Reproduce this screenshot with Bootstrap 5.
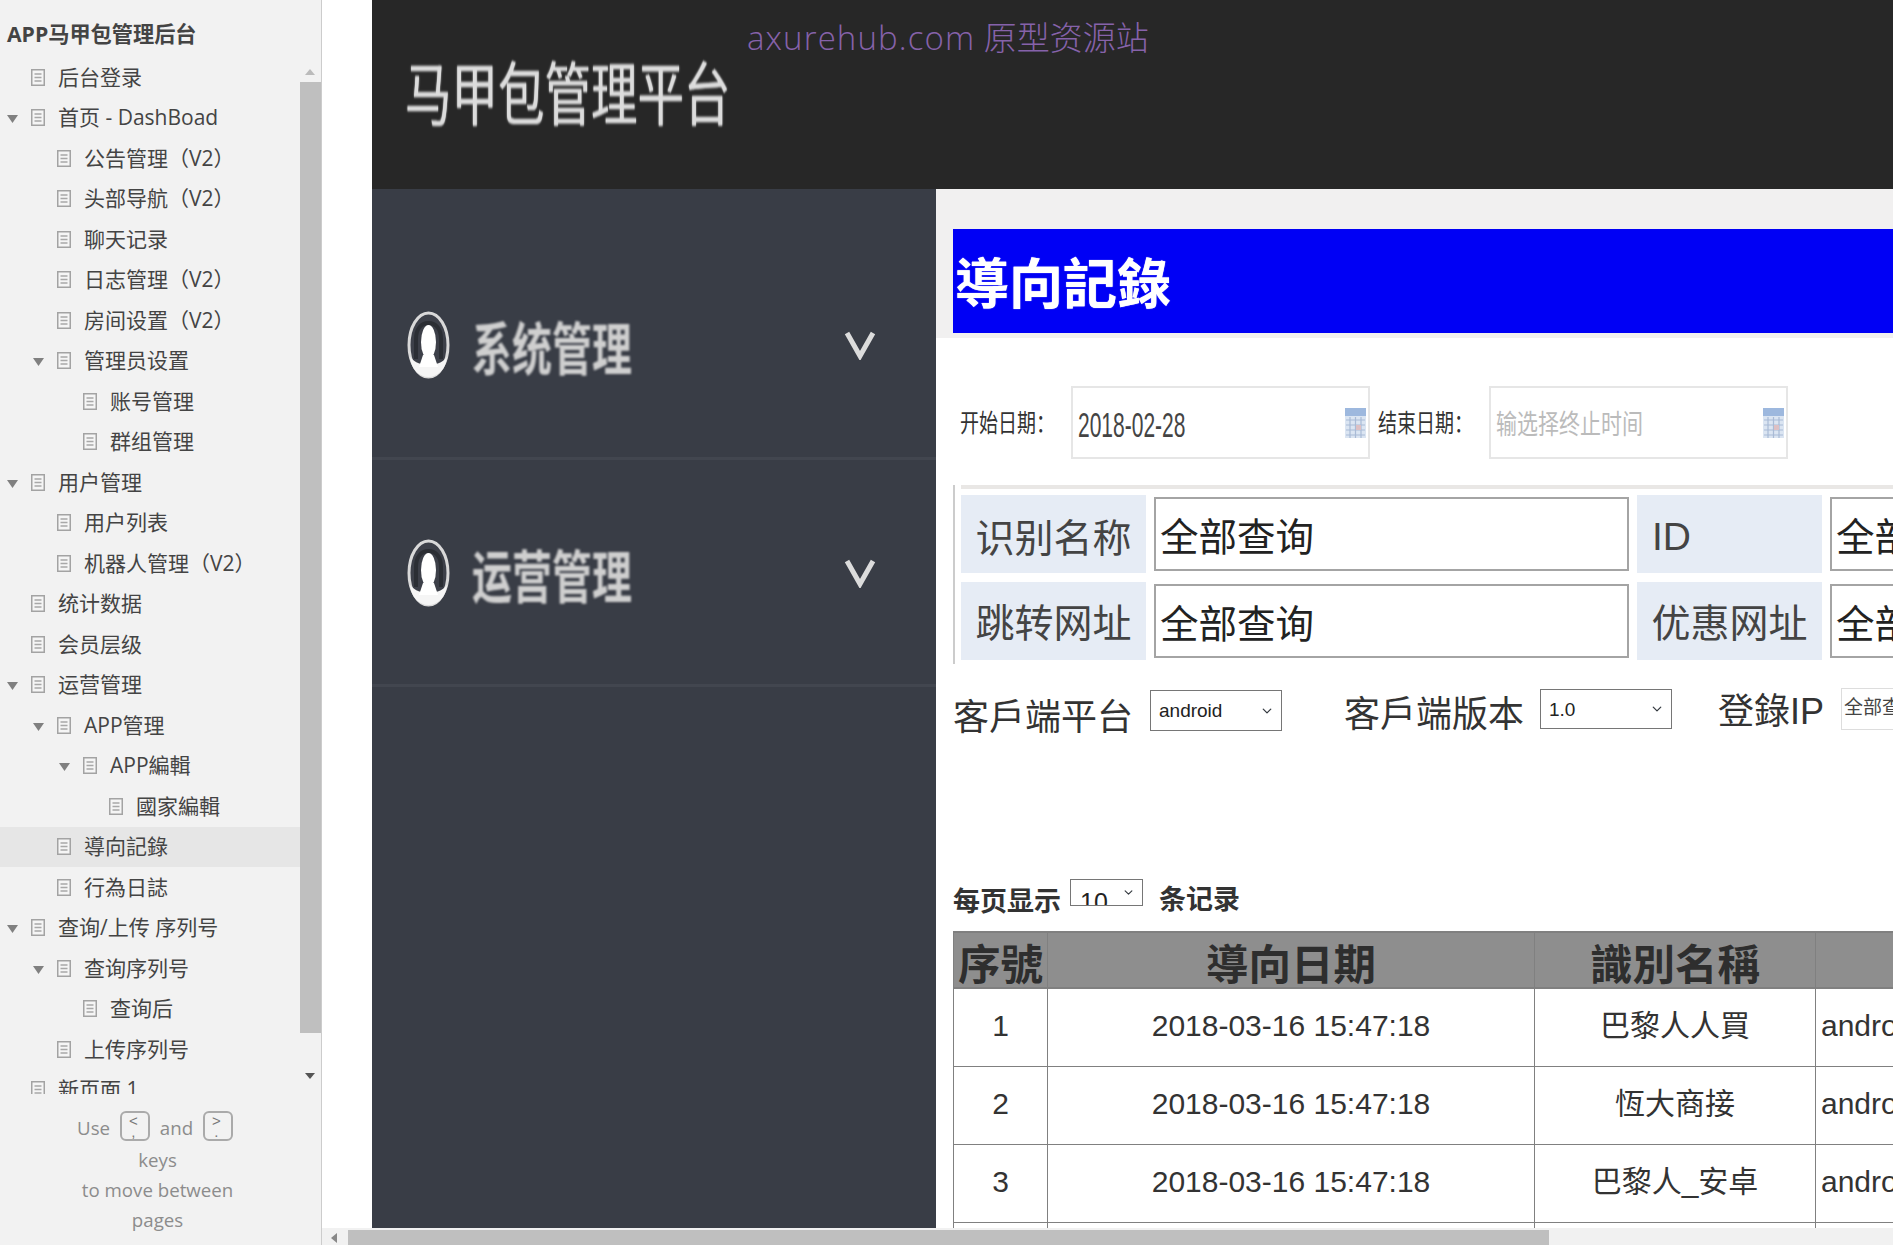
<!DOCTYPE html>
<html lang="zh">
<head>
<meta charset="utf-8">
<title>导向记录</title>
<link href="https://cdn.jsdelivr.net/npm/bootstrap@5.3.0/dist/css/bootstrap.min.css" rel="stylesheet">
<style>
html,body{height:1245px;overflow:hidden;background:#fff}
body{font-family:"Liberation Sans","Noto Sans CJK SC",sans-serif;color:#333}
.side{width:322px;flex:none;height:1245px;background:#f2f2f2;border-right:1px solid #ccc;font-family:"Open Sans","Noto Sans CJK SC",sans-serif}
.side-title{height:57px;padding:20px 0 0 7px;font-size:21.2px;line-height:28px;font-weight:700;color:#444;white-space:nowrap}
.tree-wrap{height:1037px}
.tree{flex:1 1 auto;overflow:hidden;min-width:0}
.tree-row{height:40.5px;font-size:21px;color:#444;white-space:nowrap}
.tree-row.on{background:#e6e6e6}
.lv0{padding-left:7px}.lv1{padding-left:33px}.lv2{padding-left:59px}.lv3{padding-left:85px}
.tri-slot{width:24px;flex:none}
.pg{width:14px;height:17px;flex:none;margin-right:13px}
.vbar{width:21px;flex:none;padding-top:25px}
.vthumb{height:951px;background:#bfbfbf}
.varrow{height:0;width:0;border-left:5.5px solid transparent;border-right:5.5px solid transparent}
.varrow.up{border-bottom:6px solid #bbb;margin-top:-13px;margin-left:5px;margin-bottom:7px}
.varrow.down{border-top:6px solid #555;margin-top:40px;margin-left:5px}
.side-foot{height:151px;padding-top:19px;text-align:center;font-size:18.7px;line-height:30px;color:#8c8c8c;padding-right:6px}
.keycap{display:inline-flex;flex-direction:column;align-items:flex-start;justify-content:center;vertical-align:middle;width:30px;height:30px;margin:0 5px;padding-left:7px;border:2px solid #aaa;border-radius:6px;font-size:15px;line-height:11px;color:#777;font-family:"Liberation Sans",sans-serif;transform:translateY(-4px)}
.main-col{flex:1 1 auto;min-width:0}
.stage{height:1228px;padding-left:50px;overflow:hidden}
.stamp{left:425px;top:13px;font:300 33px/50px "Open Sans","Noto Sans CJK SC",sans-serif;color:#8662aa;white-space:nowrap}
.stamp-en{letter-spacing:1.1px}
.top-head{height:189px;background:#272727;padding:0 0 9px 33px}
.brand-txt{display:inline-block;font-size:46.500px;line-height:60px;color:#dcdcdc;font-family:"Noto Sans CJK SC",sans-serif;transform:scaleY(1.5);filter:blur(.7px);text-shadow:0 0 1.5px #e6e6e6;white-space:nowrap}
.body-row{height:1039px}
.left-nav{width:564px;flex:none;background:#393d46;color:#d8d8d8}
.nav-one{height:271px;padding:122px 35px 0;border-bottom:3px solid #42464f}
.nav-two{height:227px;padding:79px 35px 0;border-bottom:3px solid #42464f}
.nav-txt{display:inline-block;margin-left:22px;font-size:40px;line-height:60px;font-weight:700;font-family:"Noto Sans CJK SC",sans-serif;transform:translateY(1px) scaleY(1.42);filter:blur(.8px);color:#cfcfcf;white-space:nowrap}
.nav-ico{width:43px;height:68px;flex:none;filter:blur(.6px)}
.nav-chev{width:32px;height:30px;flex:none;margin-left:auto;margin-right:25px;filter:blur(.4px)}
.panel{flex:1 1 auto;min-width:0;overflow:hidden;height:1039px;background:#fff}
.band{background:#f1f0f0;padding:40px 0 5px 17px}
.banner{height:104px;background:#0000f5;color:#fff;font:700 54px/104px "Noto Sans CJK TC",sans-serif;padding-left:2px;white-space:nowrap;text-shadow:0 0 1px #fff}
.date-row{margin:48px 0 0 24px;height:73px;width:900px}
.d-label{width:111px;flex:none;font-size:19px;color:#333;white-space:nowrap}
.d-label span,.d-val{display:inline-block;transform:translateY(2px) scaleY(1.3)}
.d-box.form-control{width:299px;height:73px;flex:none;border:2px solid #e6e6e6;border-radius:0;padding:0 2px 0 5px;margin-right:8px;font-size:21px;color:#444;box-shadow:none;white-space:nowrap}
.d-val.num{transform:translateY(2px) scaleY(1.7);transform-origin:center}
.d-val.ph{color:#bbb}
.cal{width:21px;height:30px;flex:none;margin-left:auto;filter:blur(.7px)}
.filter-box{margin:26px 0 0 17px;width:1300px;height:179px;border-left:2px solid #ccc;position:relative;padding-left:6px}
.filter-line{height:4px;background:#e9e7e5;margin-bottom:6px}
.filter-grid{display:grid;grid-template-columns:185px 475px 185px 475px;gap:9px 8px}
.f-label{height:78px;background:#e6ecf5;font-size:39px;line-height:76px;text-align:center;color:#444;white-space:nowrap;font-family:"Noto Sans CJK SC",sans-serif}
.f-label.hi{line-height:80px}
.f-label.lft{text-align:left;padding-left:15px;font-family:"Liberation Sans",sans-serif;line-height:84px}
.f-field.form-control{height:74px;align-self:center;border:2px solid #a4a4a4;border-radius:0;background:#fff;padding:0 4px;font-size:38.5px;line-height:70px;color:#222;box-shadow:none;white-space:nowrap;font-family:"Noto Sans CJK SC",sans-serif}
.opt-row{margin:21px 0 0 17px;width:1200px;height:46px}
.o-label{font-size:36px;line-height:46px;color:#333;white-space:nowrap;font-family:"Liberation Sans","Noto Sans CJK JP",sans-serif;flex:none}
.o-a{width:197px;margin-top:10px}
.o-b{width:180px;margin:7px 16px 0 62px}
.o-c{width:105px;margin:4px 18px 0 46px}
.pick.form-select{width:132px;height:41px;flex:none;font:19px "Liberation Sans",sans-serif;color:#222;padding:0 24px 0 8px;background-color:#fff;background-position:right 7px center;background-size:14px 10px;border:1px solid #767676;border-radius:0;box-shadow:none}
.pick.p1{margin-top:5px}
.pick.p2.form-select{margin-top:4px;height:40px}
.ip-box.form-control{width:180px;height:42px;margin:3px 0 0 0;flex:none;border:1px solid #ddd;border-radius:0;padding:0 2px;font-size:19px;line-height:38px;color:#444;box-shadow:none;white-space:nowrap}
.page-row{margin:148px 0 0 17px;height:30px;width:500px}
.page-txt{font-size:27px;line-height:36px;font-weight:700;color:#333;white-space:nowrap;font-family:"Noto Sans CJK SC",sans-serif}
.pt-a{margin-top:3px}.pt-b{margin-top:1px}
.pick-sm.form-select{width:73px;height:27px;margin:0 16px 0 9px;padding:9px 0 0 9px;font:25px/27px "Liberation Sans",sans-serif;color:#222;background-color:#fff;background-position:right 7px top 8px;background-size:13px 9px;border:1px solid #767676;border-radius:0;flex:none;box-shadow:none;overflow:hidden}
.data-tb.table{width:1500px;margin:22px 0 0 17px;table-layout:fixed;--bs-table-border-color:#808080;--bs-table-color:#333;--bs-table-bg:#fff;border-color:#808080;font-size:30px}
.data-tb th{height:56px;padding:0;background:#8e8e8e;--bs-table-bg:#8e8e8e;color:#2e2e2e;font:700 42.500px/50px "Noto Sans CJK TC",sans-serif;text-align:center;overflow:hidden;white-space:nowrap;border-width:2px 1px 2px 1px}
.data-tb td{height:78px;padding:0 0 3px;text-align:center;vertical-align:middle;font-family:"Liberation Sans","Noto Sans CJK TC",sans-serif;white-space:nowrap;border-width:1px}
.data-tb td.lf{text-align:left;padding-left:5px}
.hbar{height:17px;background:#f1f1f1;padding:2px 0 0 26px}
.hthumb{width:1201px;height:15px;background:#bfbfbf}
.harrow{left:9px;top:5px;width:0;height:0;border-top:5px solid transparent;border-bottom:5px solid transparent;border-right:6px solid #888}
</style>
</head>
<body class="d-flex m-0">
<svg width="0" height="0" class="position-absolute">
  <symbol id="pgi" viewBox="0 0 14 17"><rect x=".75" y=".75" width="12.5" height="15.5" fill="#f5f5f5" stroke="#a3a3a3" stroke-width="1.5"/><path d="M3.5 5h7M3.5 8.5h7M3.5 12h7" stroke="#a8a8a8" stroke-width="1.4"/></symbol>
  <symbol id="tri" viewBox="0 0 11 8"><path d="M0 0h11L5.5 8z" fill="#808080"/></symbol>
  <symbol id="man" viewBox="0 0 43 68"><ellipse cx="21.5" cy="34" rx="19.5" ry="32" fill="#3d4049" stroke="#d9d9d9" stroke-width="3"/><path d="M3 46c5 6 12 8 18.500 8s14-2 18.500-8c-1 12-9 20-18.500 20S4 58 3 46z" fill="#f5f5f5"/><path d="M9 48V28C9 18 14 12 21.500 12S34 18 34 28v20" fill="none" stroke="#26282d" stroke-width="4" opacity=".75"/><ellipse cx="21.500" cy="31" rx="7.500" ry="17" fill="#fff"/><path d="M16 44h11l4 12H12z" fill="#fff"/></symbol>
  <symbol id="chev" viewBox="0 0 32 30"><path d="M3 3l13 23L29 3" fill="none" stroke="#dcdcdc" stroke-width="5"/></symbol>
  <symbol id="calx" viewBox="0 0 21 30"><rect width="21" height="30" fill="#dbe5f2"/><rect width="21" height="8" fill="#9db8de"/><path d="M1 12h19M1 17h19M1 22h19M1 27h19M5 9v21M10.500 9v21M16 9v21" stroke="#a9bbd6" stroke-width="1.200"/><rect x="11" y="17" width="5" height="5" fill="#ddc0c4"/></symbol>
</svg>

<aside class="side d-flex flex-column">
  <div class="side-title">APP马甲包管理后台</div>
  <div class="tree-wrap d-flex">
    <div class="tree">
      <div class="tree-row lv0 d-flex align-items-center"><span class="tri-slot"></span><svg class="pg"><use href="#pgi"/></svg>后台登录</div>
      <div class="tree-row lv0 d-flex align-items-center"><span class="tri-slot"><svg width="11" height="8"><use href="#tri"/></svg></span><svg class="pg"><use href="#pgi"/></svg>首页 - DashBoad</div>
      <div class="tree-row lv1 d-flex align-items-center"><span class="tri-slot"></span><svg class="pg"><use href="#pgi"/></svg>公告管理（V2）</div>
      <div class="tree-row lv1 d-flex align-items-center"><span class="tri-slot"></span><svg class="pg"><use href="#pgi"/></svg>头部导航（V2）</div>
      <div class="tree-row lv1 d-flex align-items-center"><span class="tri-slot"></span><svg class="pg"><use href="#pgi"/></svg>聊天记录</div>
      <div class="tree-row lv1 d-flex align-items-center"><span class="tri-slot"></span><svg class="pg"><use href="#pgi"/></svg>日志管理（V2）</div>
      <div class="tree-row lv1 d-flex align-items-center"><span class="tri-slot"></span><svg class="pg"><use href="#pgi"/></svg>房间设置（V2）</div>
      <div class="tree-row lv1 d-flex align-items-center"><span class="tri-slot"><svg width="11" height="8"><use href="#tri"/></svg></span><svg class="pg"><use href="#pgi"/></svg>管理员设置</div>
      <div class="tree-row lv2 d-flex align-items-center"><span class="tri-slot"></span><svg class="pg"><use href="#pgi"/></svg>账号管理</div>
      <div class="tree-row lv2 d-flex align-items-center"><span class="tri-slot"></span><svg class="pg"><use href="#pgi"/></svg>群组管理</div>
      <div class="tree-row lv0 d-flex align-items-center"><span class="tri-slot"><svg width="11" height="8"><use href="#tri"/></svg></span><svg class="pg"><use href="#pgi"/></svg>用户管理</div>
      <div class="tree-row lv1 d-flex align-items-center"><span class="tri-slot"></span><svg class="pg"><use href="#pgi"/></svg>用户列表</div>
      <div class="tree-row lv1 d-flex align-items-center"><span class="tri-slot"></span><svg class="pg"><use href="#pgi"/></svg>机器人管理（V2）</div>
      <div class="tree-row lv0 d-flex align-items-center"><span class="tri-slot"></span><svg class="pg"><use href="#pgi"/></svg>统计数据</div>
      <div class="tree-row lv0 d-flex align-items-center"><span class="tri-slot"></span><svg class="pg"><use href="#pgi"/></svg>会员层级</div>
      <div class="tree-row lv0 d-flex align-items-center"><span class="tri-slot"><svg width="11" height="8"><use href="#tri"/></svg></span><svg class="pg"><use href="#pgi"/></svg>运营管理</div>
      <div class="tree-row lv1 d-flex align-items-center"><span class="tri-slot"><svg width="11" height="8"><use href="#tri"/></svg></span><svg class="pg"><use href="#pgi"/></svg>APP管理</div>
      <div class="tree-row lv2 d-flex align-items-center"><span class="tri-slot"><svg width="11" height="8"><use href="#tri"/></svg></span><svg class="pg"><use href="#pgi"/></svg>APP編輯</div>
      <div class="tree-row lv3 d-flex align-items-center"><span class="tri-slot"></span><svg class="pg"><use href="#pgi"/></svg>國家編輯</div>
      <div class="tree-row on lv1 d-flex align-items-center"><span class="tri-slot"></span><svg class="pg"><use href="#pgi"/></svg>導向記錄</div>
      <div class="tree-row lv1 d-flex align-items-center"><span class="tri-slot"></span><svg class="pg"><use href="#pgi"/></svg>行為日誌</div>
      <div class="tree-row lv0 d-flex align-items-center"><span class="tri-slot"><svg width="11" height="8"><use href="#tri"/></svg></span><svg class="pg"><use href="#pgi"/></svg>查询/上传 序列号</div>
      <div class="tree-row lv1 d-flex align-items-center"><span class="tri-slot"><svg width="11" height="8"><use href="#tri"/></svg></span><svg class="pg"><use href="#pgi"/></svg>查询序列号</div>
      <div class="tree-row lv2 d-flex align-items-center"><span class="tri-slot"></span><svg class="pg"><use href="#pgi"/></svg>查询后</div>
      <div class="tree-row lv1 d-flex align-items-center"><span class="tri-slot"></span><svg class="pg"><use href="#pgi"/></svg>上传序列号</div>
      <div class="tree-row lv0 d-flex align-items-center"><span class="tri-slot"></span><svg class="pg"><use href="#pgi"/></svg>新页面 1</div>
    </div>
    <div class="vbar">
      <div class="varrow up"></div>
      <div class="vthumb"></div>
      <div class="varrow down"></div>
    </div>
  </div>
  <div class="side-foot">Use <span class="keycap">&lt;<br>,</span> and <span class="keycap">&gt;<br>.</span><br>keys<br>to move between<br>pages</div>
</aside>

<div class="main-col d-flex flex-column">
  <div class="stage position-relative">
    <div class="stamp position-absolute"><span class="stamp-en">axurehub.com</span> 原型资源站</div>
    <header class="top-head d-flex align-items-center"><span class="brand-txt">马甲包管理平台</span></header>
    <div class="body-row d-flex">
      <nav class="left-nav">
        <div class="nav-one"><div class="d-flex align-items-center"><svg class="nav-ico"><use href="#man"/></svg><span class="nav-txt">系统管理</span><svg class="nav-chev"><use href="#chev"/></svg></div></div>
        <div class="nav-two"><div class="d-flex align-items-center"><svg class="nav-ico"><use href="#man"/></svg><span class="nav-txt">运营管理</span><svg class="nav-chev"><use href="#chev"/></svg></div></div>
      </nav>
      <section class="panel">
        <div class="band"><div class="banner">導向記錄</div></div>
        <div class="date-row d-flex align-items-center">
          <div class="d-label"><span>开始日期：</span></div>
          <div class="d-box form-control d-flex align-items-center"><span class="d-val num">2018-02-28</span><svg class="cal"><use href="#calx"/></svg></div>
          <div class="d-label"><span>结束日期：</span></div>
          <div class="d-box form-control d-flex align-items-center"><span class="d-val ph">输选择终止时间</span><svg class="cal"><use href="#calx"/></svg></div>
        </div>
        <div class="filter-box">
          <div class="filter-line"></div>
          <div class="filter-grid">
            <div class="f-label hi">识别名称</div>
            <div class="f-field form-control">全部查询</div>
            <div class="f-label lft">ID</div>
            <div class="f-field form-control">全部查询</div>
            <div class="f-label">跳转网址</div>
            <div class="f-field form-control">全部查询</div>
            <div class="f-label">优惠网址</div>
            <div class="f-field form-control">全部查询</div>
          </div>
        </div>
        <div class="opt-row d-flex align-items-start">
          <div class="o-label o-a">客戶端平台</div>
          <select class="pick p1 form-select"><option>android</option></select>
          <div class="o-label o-b">客戶端版本</div>
          <select class="pick p2 form-select"><option>1.0</option></select>
          <div class="o-label o-c">登錄IP</div>
          <div class="ip-box form-control">全部查询</div>
        </div>
        <div class="page-row d-flex align-items-start">
          <span class="page-txt pt-a">每页显示</span>
          <select class="pick-sm form-select"><option>10</option></select>
          <span class="page-txt pt-b">条记录</span>
        </div>
        <table class="data-tb table table-bordered">
          <colgroup><col style="width:94px"><col style="width:487px"><col style="width:281px"><col style="width:300px"><col></colgroup>
          <thead><tr><th>序號</th><th>導向日期</th><th>識別名稱</th><th></th><th></th></tr></thead>
          <tbody>
            <tr><td>1</td><td>2018-03-16 15:47:18</td><td>巴黎人人買</td><td class="lf">android</td><td></td></tr>
            <tr><td>2</td><td>2018-03-16 15:47:18</td><td>恆大商接</td><td class="lf">android</td><td></td></tr>
            <tr><td>3</td><td>2018-03-16 15:47:18</td><td>巴黎人_安卓</td><td class="lf">android</td><td></td></tr>
            <tr><td>4</td><td>2018-03-16 15:47:18</td><td></td><td class="lf">android</td><td></td></tr>
          </tbody>
        </table>
      </section>
    </div>
  </div>
  <div class="hbar position-relative"><span class="harrow position-absolute"></span><div class="hthumb"></div></div>
</div>
<script src="https://cdn.jsdelivr.net/npm/bootstrap@5.3.0/dist/js/bootstrap.bundle.min.js"></script>
</body>
</html>
